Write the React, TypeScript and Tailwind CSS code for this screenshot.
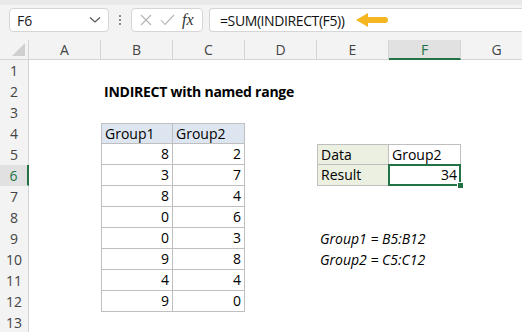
import type { ReactNode } from "react"

const COLS = ["A", "B", "C", "D", "E", "F", "G"]
const ROWS = Array.from({ length: 13 }, (_, i) => i + 1)

const group1 = [8, 3, 8, 0, 0, 9, 4, 9]
const group2 = [2, 7, 4, 6, 3, 8, 4, 0]

const tableBorder = "border-[#bfbfbf]"

function cellFor(col: string, row: number): { cls: string; content?: ReactNode; selected?: boolean } {
  // title
  if (col === "B" && row === 2) {
    return { cls: "font-bold whitespace-nowrap tracking-[-0.25px]", content: "INDIRECT with named range" }
  }
  // Group1 / Group2 table
  if ((col === "B" || col === "C") && row >= 4 && row <= 12) {
    const edges = [
      "border-r border-b",
      tableBorder,
      row === 4 ? "border-t" : "",
      col === "B" ? "border-l" : "",
    ].join(" ")
    if (row === 4) {
      return { cls: `${edges} bg-[#dde6f0]`, content: col === "B" ? "Group1" : "Group2" }
    }
    const v = col === "B" ? group1[row - 5] : group2[row - 5]
    return { cls: `${edges} justify-end`, content: v }
  }
  // Data / Result box
  if ((col === "E" || col === "F") && (row === 5 || row === 6)) {
    const edges = [
      "border-r border-b",
      tableBorder,
      row === 5 ? "border-t" : "",
      col === "E" ? "border-l bg-[#ebf0e1]" : "",
    ].join(" ")
    if (col === "E") return { cls: edges, content: row === 5 ? "Data" : "Result" }
    if (row === 5) return { cls: edges, content: "Group2" }
    return { cls: `${edges} justify-end`, content: 34, selected: true }
  }
  if (col === "E" && row === 9) {
    return { cls: "italic whitespace-nowrap", content: "Group1 = B5:B12" }
  }
  if (col === "E" && row === 10) {
    return { cls: "italic whitespace-nowrap", content: "Group2 = C5:C12" }
  }
  return { cls: "" }
}

function Toolbar() {
  return (
    <div className="h-[40px] bg-[#f3f3f3] relative">
      <div className="h-[5px] bg-[#e9e9e9]" />
      <div className="flex items-center pt-[3px]">
        <div className="ml-[9px] w-[100px] h-[24px] rounded-[4px] border border-[#d6d6d6] bg-white flex items-center justify-between pl-[7px] pr-[7px] text-[14px] text-[#222]">
          <span>F6</span>
          <svg width="12" height="8" viewBox="0 0 12 8">
            <path d="M1 1.5 L6 6 L11 1.5" fill="none" stroke="#555" strokeWidth="1.2" />
          </svg>
        </div>
        <div className="w-[22px] flex flex-col items-center gap-[2px]">
          <span className="w-[2px] h-[2px] bg-[#8a8a8a]" />
          <span className="w-[2px] h-[2px] bg-[#8a8a8a]" />
          <span className="w-[2px] h-[2px] bg-[#8a8a8a]" />
        </div>
        <div className="w-[72px] h-[24px] rounded-[4px] border border-[#d6d6d6] bg-white flex items-center pl-[8px]">
          <svg width="12" height="12" viewBox="0 0 12 12">
            <path d="M1 1 L11 11 M11 1 L1 11" stroke="#b3b3b3" strokeWidth="1.1" fill="none" />
          </svg>
          <svg width="15" height="12" viewBox="0 0 15 12" className="ml-[8px]">
            <path d="M1 6 L5 10.5 L14 1" stroke="#b3b3b3" strokeWidth="1.1" fill="none" />
          </svg>
          <span className="ml-[7px] text-[16px] italic text-[#333] leading-none" style={{ fontFamily: '"Liberation Serif", serif' }}>
            fx
          </span>
        </div>
        <div className="ml-[6px] flex-1 h-[24px] rounded-l-[4px] border border-r-0 border-[#d6d6d6] bg-white flex items-center pl-[10px] text-[14px] tracking-[-0.4px] text-[#111] relative">
          <span>=SUM(INDIRECT(F5))</span>
          <svg width="32" height="14" viewBox="0 0 32 14" className="ml-[11px]">
            <polygon points="0,7 12,0 12,14" fill="#f5b621" />
            <rect x="10" y="4" width="22" height="6" rx="3" fill="#f5b621" />
          </svg>
        </div>
      </div>
    </div>
  )
}

export default function App() {
  return (
    <div className="w-[522px] h-[332px] overflow-hidden bg-white" style={{ fontFamily: '"Open Sans", "Noto Sans", sans-serif' }}>
      <Toolbar />
      <div className="grid grid-cols-[29px_repeat(7,72px)] grid-rows-[20px_repeat(13,21px)] text-[14px] text-black">
        {/* corner */}
        <div className="bg-[#f3f3f3] border-r border-b border-[#d4d4d4] flex items-end justify-end p-[3px]">
          <svg width="13" height="13" viewBox="0 0 13 13">
            <polygon points="13,0 13,13 0,13" fill="#d0d0d0" />
          </svg>
        </div>
        {COLS.map((c) => (
          <div
            key={c}
            className={
              c === "F"
                ? "bg-[#e1e1e1] border-r border-[#d4d4d4] border-b-2 border-b-[#217346] flex items-center justify-center text-[#217346]"
                : "bg-[#f3f3f3] border-r border-b border-[#d4d4d4] flex items-center justify-center text-[#444]"
            }
          >
            {c}
          </div>
        ))}
        {ROWS.map((r) => (
          <RowCells key={r} row={r} />
        ))}
      </div>
    </div>
  )
}

function RowCells({ row }: { row: number }) {
  return (
    <>
      <div
        className={
          row === 6
            ? "bg-[#e1e1e1] border-r-2 border-r-[#217346] border-b border-b-[#e1e1e1] flex items-center justify-center text-[#217346]"
            : "bg-[#f3f3f3] border-r border-[#d4d4d4] flex items-center justify-center text-[#444]"
        }
      >
        {row}
      </div>
      {COLS.map((c) => {
        const cell = cellFor(c, row)
        return (
          <div key={c} className={`relative flex items-center px-[3px] leading-none ${cell.cls}`}>
            {cell.content !== undefined && <span>{cell.content}</span>}
            {cell.selected && (
              <>
                <div className="absolute -left-px -top-px -right-px -bottom-px border-2 border-[#217346]" />
                <div className="absolute -right-[4px] -bottom-[4px] w-[7px] h-[7px] bg-[#217346] border border-white" />
              </>
            )}
          </div>
        )
      })}
    </>
  )
}
